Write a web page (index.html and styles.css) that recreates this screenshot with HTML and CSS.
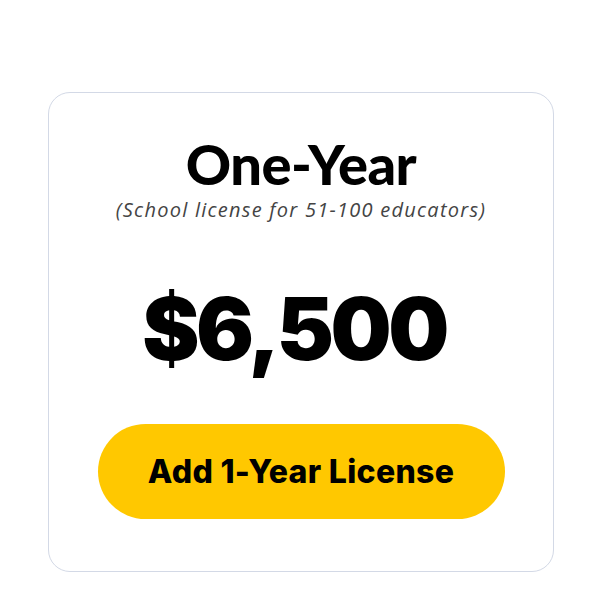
FILE: index.html
```html
<!DOCTYPE html>
<html>
<head>
<meta charset="utf-8">
<link rel="stylesheet" href="styles.css">
</head>
<body>
<div class="card">
  <h2 class="title">One-Year</h2>
  <p class="subtitle">(School license for 51-100 educators)</p>
  <div class="price">$6,500</div>
  <button class="cta">Add 1-Year License</button>
</div>
</body>
</html>
```
FILE: styles.css
```css
html, body {
  margin: 0;
  padding: 0;
  background: #ffffff;
}
body {
  padding: 92px 0 0 48px;
  font-family: "Lato", "Noto Sans", sans-serif;
}
.card {
  box-sizing: border-box;
  width: 506px;
  height: 480px;
  border: 1px solid #d3d9e6;
  border-radius: 22px;
  display: flex;
  flex-direction: column;
  align-items: center;
  padding-top: 40px;
}
.title {
  margin: 0;
  font-family: "Lato", sans-serif;
  font-weight: 900;
  font-size: 56px;
  line-height: 62px;
  color: #000;
  letter-spacing: -0.5px;
}
.subtitle {
  margin: 2px 0 0;
  font-family: "Open Sans", sans-serif;
  font-style: italic;
  font-size: 20px;
  line-height: 26px;
  color: #444;
  letter-spacing: 1.25px;
}
.price {
  margin: 61px 14px 0 0;
  font-family: "Inter", sans-serif;
  font-weight: 900;
  font-size: 86px;
  line-height: 90px;
  color: #000;
  letter-spacing: -3.5px;
}
.cta {
  margin-top: 50px;
  width: 407px;
  height: 95px;
  border: none;
  border-radius: 48px;
  background: #ffc800;
  font-family: "Inter", sans-serif;
  font-weight: 800;
  font-size: 32px;
  letter-spacing: 0.3px;
  color: #000;
  padding: 0;
}
```
